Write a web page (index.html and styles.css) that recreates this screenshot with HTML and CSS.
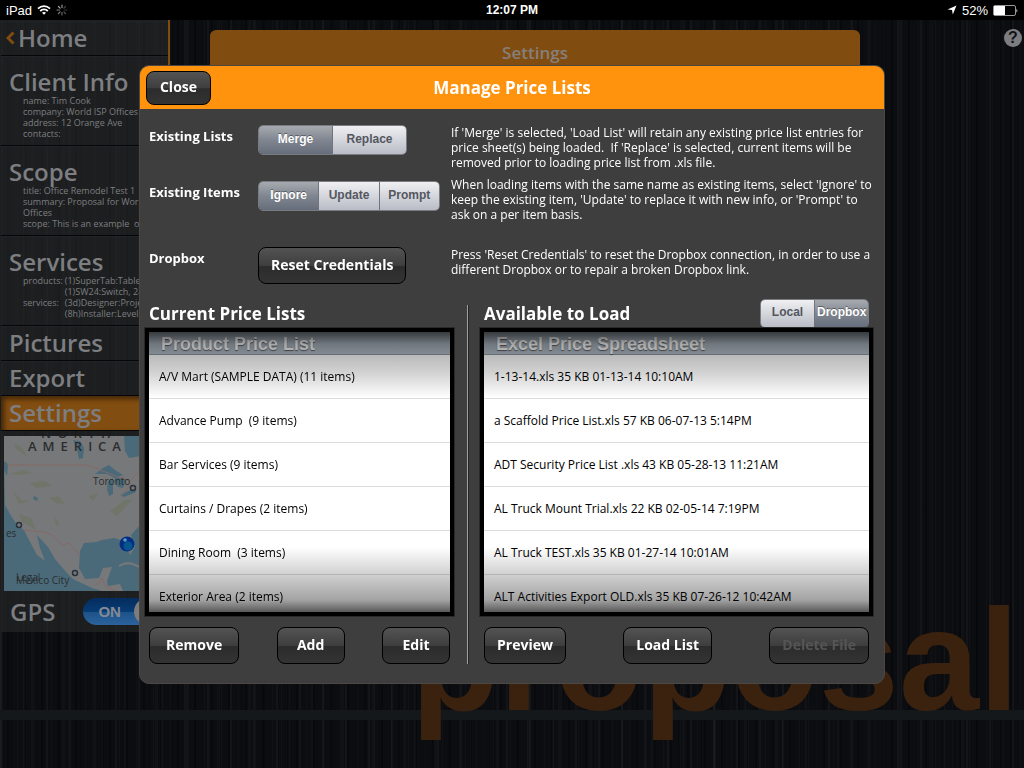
FILE: index.html
```html
<!DOCTYPE html>
<html lang="en">
<head>
  <meta charset="UTF-8">
  <title>Manage Price Lists</title>
  <meta name="viewport" content="width=device-width, initial-scale=1.0">
  <link rel="stylesheet" href="styles.css">
</head>
<body>

<header class="status-bar">
  <div class="status-left">
    <span>iPad</span>
    <svg width="14" height="10" viewBox="0 0 14 10" fill="none" stroke="#fff" stroke-width="1.8">
      <path d="M1 3.6C4.4.4 9.6.4 13 3.6"/>
      <path d="M3.2 6C5.4 4 8.6 4 10.8 6"/>
      <path d="M7 9.8L5 7.7C6.2 6.7 7.8 6.7 9 7.7Z" fill="#fff" stroke="none"/>
    </svg>
    <svg width="12" height="12" viewBox="0 0 12 12" stroke-width="1.2" stroke-linecap="round">
      <path d="M6 1v2.4" stroke="#999"/>
      <path d="M9.5 2.5L7.9 4.1" stroke="#444"/>
      <path d="M11 6H8.6" stroke="#333"/>
      <path d="M9.5 9.5L7.9 7.9" stroke="#555"/>
      <path d="M6 11V8.6" stroke="#666"/>
      <path d="M2.5 9.5L4.1 7.9" stroke="#777"/>
      <path d="M1 6h2.4" stroke="#888"/>
      <path d="M2.5 2.5l1.6 1.6" stroke="#aaa"/>
    </svg>
  </div>
  <div class="status-time">12:07 PM</div>
  <div class="status-right">
    <svg width="10" height="10" viewBox="0 0 10 10"><path d="M9.5.5L5.8 9.5L5 5L.5 4.6Z" fill="#fff"/></svg>
    <span>52%</span>
    <svg width="25" height="11" viewBox="0 0 25 11">
      <rect x=".5" y=".5" width="22" height="10" rx="1.5" fill="none" stroke="#999"/>
      <rect x="1" y="1" width="11" height="9" fill="#fff"/>
      <path d="M23.5 3.5q1.5 2 0 4z" fill="#fff"/>
    </svg>
  </div>
</header>

<main class="app">
  <nav class="sidebar">
    <a class="nav-item home" href="#">
      <svg width="9" height="14" viewBox="0 0 9 14" fill="none" stroke="#814c10" stroke-width="3"><path d="M7.5 1.5L2 7l5.5 5.5"/></svg>
      <span class="nav-title">Home</span>
    </a>
    <a class="nav-item tall" href="#">
      <span class="nav-title">Client Info</span>
      <span class="nav-detail">name: Tim Cook<br>company: World ISP Offices<br>address: 12 Orange Ave<br>contacts:</span>
    </a>
    <a class="nav-item tall" href="#">
      <span class="nav-title">Scope</span>
      <span class="nav-detail">title: Office Remodel Test 1<br>summary: Proposal for World<br>Offices<br>scope: This is an example &nbsp;of</span>
    </a>
    <a class="nav-item tall" href="#">
      <span class="nav-title">Services</span>
      <span class="nav-detail services">
        <span>products:</span><span>(1)SuperTab:Tablet<br>(1)SW24:Switch, 24</span>
        <span>services:</span><span>(3d)Designer:Project<br>(8h)Installer:Level</span>
      </span>
    </a>
    <a class="nav-item" href="#"><span class="nav-title">Pictures</span></a>
    <a class="nav-item" href="#"><span class="nav-title">Export</span></a>
    <a class="nav-item active" href="#"><span class="nav-title">Settings</span></a>

    <svg class="map" width="160" height="155" viewBox="0 0 160 155">
      <rect width="160" height="155" fill="#4a6a79"/>
      <path d="M0 0H160V65L137 88L127 99L131 111L126 119L120 105L110 102L98 104L92 106L80 107L76 115L75 132L81 143L95 142L99 132L108 131L103 145L104 150L116 148L119 155H98L88 152L69 143L62 136L51 123L44 111L33 99L36 112L41 125L33 119L25 104L20 94L13 89L6 78L1 69L0 25Z" fill="#777879"/>
      <g fill="#4a6a79">
        <path d="M91 38L99 32L105 29L111 34L119 39L111 42L103 38Z"/>
        <path d="M104 45L109 42L109 58L105 60L103 53Z"/>
        <path d="M112 41L122 43L119 52L114 51L110 45Z"/>
        <path d="M116 59L130 52L132 56L120 61Z"/>
        <path d="M76 5L80 12L79 22L75 23L73 13L69 4Z"/>
        <path d="M120 0H160V25L137 20L125 22L121 15Z"/>
        <path d="M30 60L34 62L33 65L29 63Z"/>
        <path d="M0 25L4 28L3 40L0 34Z"/>
      </g>
      <g fill="#707569">
        <path d="M6 38l14-4 8 3-12 2zM9 55l8 9 9 1-11 3zM15 78l12 4 5 12-14-8zM25 47l16-2 8 5-16 2zM45 62l10-2 6 8-9-1zM106 75l15-11 8-1-16 17z"/>
        <path d="M10 7l8 5 6 9-12-8zM50 80l6 8-4 2zM85 60l9-3-5 8z"/>
      </g>
      <g fill="none" stroke="#886868">
        <path d="M3 29H84L99 35L114 41L126 45L137 33"/>
        <path d="M19 94L40 96L48 99L59 109L65 107L75 118"/>
        <path d="M91 150L98 142L102 151L112 155M117 60L127 48"/>
      </g>
      <path d="M115 130q9-6 20 1" fill="none" stroke="#777879" stroke-width="2"/>
      <g fill="#777879" stroke="#28313d" stroke-width="1.5">
        <circle cx="129" cy="52" r="2.5"/>
        <circle cx="15" cy="89" r="2.5"/>
        <circle cx="71" cy="137" r="2.5"/>
      </g>
      <g class="map-text">
        <text class="map-region" x="37" y="2">NORTH</text>
        <text class="map-region" x="24" y="15">AMERICA</text>
        <text x="89" y="49">Toronto</text>
        <text x="2" y="101">es</text>
        <text x="12" y="145">Legal</text>
        <text x="12" y="148">Mexico City</text>
      </g>
      <circle cx="123" cy="108" r="7.5" fill="#052d83"/>
      <circle cx="124" cy="110" r="4.5" fill="#07558d"/>
      <circle cx="121" cy="104" r="1.8" fill="#57a1c5"/>
    </svg>

    <div class="gps">
      <label class="nav-title" for="gps">GPS</label>
      <span class="switch">
        <input type="checkbox" id="gps" checked>
        <span class="switch-text">ON</span>
      </span>
    </div>
  </nav>

  <section class="settings-page">
    <h1>Settings</h1>
  </section>

  <button class="help" aria-label="Help">?</button>
  <div class="floor-line"></div>
  <div class="brand">proposal</div>
</main>

<div class="overlay">
  <div class="modal" role="dialog" aria-labelledby="modalTitle">
    <header class="modal-header">
      <button class="btn">Close</button>
      <h2 id="modalTitle">Manage Price Lists</h2>
    </header>

    <div class="options">
      <div class="option">
        <h3>Existing Lists</h3>
        <div class="segmented two">
          <button class="selected" aria-pressed="true">Merge</button>
          <button aria-pressed="false">Replace</button>
        </div>
        <p>If 'Merge' is selected, 'Load List' will retain any existing price list entries for<br>price sheet(s) being loaded.&nbsp; If 'Replace' is selected, current items will be<br>removed prior to loading price list from .xls file.</p>
      </div>
      <div class="option second">
        <h3>Existing Items</h3>
        <div class="segmented three">
          <button class="selected" aria-pressed="true">Ignore</button>
          <button aria-pressed="false">Update</button>
          <button aria-pressed="false">Prompt</button>
        </div>
        <p>When loading items with the same name as existing items, select 'Ignore' to<br>keep the existing item, 'Update' to replace it with new info, or 'Prompt' to<br>ask on a per item basis.</p>
      </div>
      <div class="option third">
        <h3>Dropbox</h3>
        <div><button class="btn">Reset Credentials</button></div>
        <p>Press 'Reset Credentials' to reset the Dropbox connection, in order to use a<br>different Dropbox or to repair a broken Dropbox link.</p>
      </div>
    </div>

    <div class="lists">
      <section class="panel current">
        <div class="panel-head">
          <h3>Current Price Lists</h3>
        </div>
        <div class="list">
          <h4>Product Price List</h4>
          <ul>
            <li>A/V Mart (SAMPLE DATA) (11 items)</li>
            <li>Advance Pump &nbsp;(9 items)</li>
            <li>Bar Services (9 items)</li>
            <li>Curtains / Drapes (2 items)</li>
            <li>Dining Room &nbsp;(3 items)</li>
            <li>Exterior Area (2 items)</li>
          </ul>
        </div>
        <div class="actions">
          <button class="btn">Remove</button>
          <button class="btn">Add</button>
          <button class="btn">Edit</button>
        </div>
      </section>

      <div class="divider"></div>

      <section class="panel available">
        <div class="panel-head">
          <h3>Available to Load</h3>
          <div class="segmented source">
            <button aria-pressed="false">Local</button>
            <button class="selected" aria-pressed="true">Dropbox</button>
          </div>
        </div>
        <div class="list">
          <h4>Excel Price Spreadsheet</h4>
          <ul>
            <li>1-13-14.xls 35 KB 01-13-14 10:10AM</li>
            <li>a Scaffold Price List.xls 57 KB 06-07-13 5:14PM</li>
            <li>ADT Security Price List .xls 43 KB 05-28-13 11:21AM</li>
            <li>AL Truck Mount Trial.xls 22 KB 02-05-14 7:19PM</li>
            <li>AL Truck TEST.xls 35 KB 01-27-14 10:01AM</li>
            <li>ALT Activities Export OLD.xls 35 KB 07-26-12 10:42AM</li>
          </ul>
        </div>
        <div class="actions">
          <button class="btn">Preview</button>
          <button class="btn">Load List</button>
          <button class="btn" disabled>Delete File</button>
        </div>
      </section>
    </div>
  </div>
</div>

</body>
</html>
```

FILE: styles.css
```css
* {
  box-sizing: border-box;
}

body {
  margin: 0;
  min-height: 100vh;
  display: flex;
  flex-direction: column;
  background: #000;
  color: #fff;
  font-family: "Trebuchet MS", "Open Sans", sans-serif;
  overflow: hidden;
}

h1, h2, h3, h4, p, ul {
  margin: 0;
  padding: 0;
}

button {
  font-family: inherit;
  cursor: pointer;
}

/* status bar */
.status-bar {
  display: grid;
  grid-template-columns: 1fr auto 1fr;
  align-items: center;
  height: 20px;
  padding: 0 6px;
  background: #000;
  font: 13px "Liberation Sans", Arial, sans-serif;
}

.status-left,
.status-right {
  display: flex;
  align-items: center;
  gap: 5px;
}

.status-right {
  justify-content: flex-end;
}

.status-time {
  font-size: 12px;
  font-weight: bold;
}

/* page behind the dialog */
.app {
  position: relative;
  flex: 1;
  display: flex;
  align-items: flex-start;
  overflow: hidden;
  background:
    repeating-linear-gradient(90deg, rgba(255,255,255,0.02) 0 1px, transparent 1px 7px, rgba(0,0,0,0.3) 7px 9px, transparent 9px 17px),
    repeating-linear-gradient(90deg, rgba(255,255,255,0.03) 0 2px, transparent 2px 11px, rgba(0,0,0,0.25) 11px 12px, transparent 12px 23px),
    repeating-linear-gradient(90deg, rgba(255,255,255,0.02) 0 3px, transparent 3px 31px),
    #0c0d11;
}

.sidebar {
  width: 169px;
  margin-left: 1px;
  padding-top: 1px;
  flex: none;
  border-right: 2px solid #814c10;
  background: rgba(40,41,42,0.6);
}

.nav-item {
  display: block;
  height: 35px;
  padding-left: 8px;
  border-bottom: 1px solid #050608;
  box-shadow: inset 0 1px #222326;
  color: #7d7e81;
  text-decoration: none;
  white-space: nowrap;
}

.nav-title {
  display: block;
  font-size: 24px;
  font-weight: 600;
  line-height: 34px;
  color: #7d7e81;
}

.home {
  display: flex;
  align-items: center;
  gap: 3px;
  padding-left: 5px;
}

.tall {
  height: 90px;
  padding-top: 9px;
}

.nav-detail {
  display: block;
  margin-left: 14px;
  font-size: 9px;
  line-height: 11px;
}

.tall .nav-title {
  height: 30px;
}

.services {
  display: grid;
  grid-template-columns: auto 1fr;
  column-gap: 2px;
}

.active {
  background: #824d10;
  box-shadow: inset 3px 3px 5px rgba(0,0,0,0.5);
}

.map {
  display: block;
  margin: 5px 0 0 3px;
}

.map-text {
  font-family: "Open Sans", sans-serif;
  font-size: 10px;
  fill: #2b2d30;
}

.map-region {
  font-size: 13px;
  font-weight: 600;
  letter-spacing: 6px;
}

.gps {
  display: flex;
  align-items: center;
  gap: 28px;
  height: 41px;
  padding-left: 9px;
}

.switch {
  position: relative;
  flex: none;
  width: 78px;
  height: 27px;
}

.switch input {
  appearance: none;
  width: 78px;
  height: 27px;
  margin: 0;
  border-radius: 14px;
  background: linear-gradient(#052c5d, #073c75 50%, #1d5289 52%, #2c639d);
}

.switch input::after {
  content: "";
  position: absolute;
  right: 0;
  top: 0;
  width: 27px;
  height: 27px;
  border-radius: 50%;
  background: #7c7c7d;
}

.switch-text {
  position: absolute;
  left: 15px;
  top: 0;
  font: bold 15px/27px "Liberation Sans", Arial, sans-serif;
  color: #858b94;
  pointer-events: none;
}

.settings-page {
  width: 650px;
  height: 640px;
  margin: 10px 0 0 40px;
}

.settings-page h1 {
  height: 60px;
  border-radius: 6px 6px 0 0;
  background: #814c10;
  color: #85807b;
  font-size: 17px;
  font-weight: 600;
  line-height: 46px;
  text-align: center;
}

.help {
  position: absolute;
  top: 9px;
  right: 2px;
  width: 18px;
  height: 18px;
  padding: 0;
  border: none;
  border-radius: 50%;
  background: #7c7d7f;
  color: #111318;
  font: bold 16px/18px "Liberation Sans", Arial, sans-serif;
}

.floor-line {
  position: absolute;
  left: 0;
  right: 0;
  bottom: 48px;
  height: 10px;
  background: #15181b;
}

.brand {
  position: absolute;
  right: 5px;
  bottom: 35px;
  color: #3a220f;
  font-family: "Liberation Sans", Arial, sans-serif;
  font-size: 144px;
  font-weight: bold;
  line-height: 1;
}

/* dialog */
.overlay {
  position: fixed;
  inset: 0;
  display: flex;
  justify-content: center;
  align-items: flex-start;
  padding-top: 65px;
}

.modal {
  width: 746px;
  padding-bottom: 19px;
  border: 1px solid #4c4742;
  border-radius: 10px;
  background: #3e3e3e;
  overflow: hidden;
}

.modal-header {
  display: grid;
  grid-template-columns: 1fr auto 1fr;
  align-items: center;
  height: 43px;
  padding: 0 6px;
  background: #ff930d;
}

.modal-header .btn {
  justify-self: start;
  height: 34px;
}

.modal h2 {
  font-size: 17px;
  font-weight: 700;
}

.btn {
  min-width: 65px;
  height: 37px;
  padding: 0 12px 3px;
  border: 1px solid #000;
  border-radius: 8px;
  background: linear-gradient(#535353, #3e3e3e 50%, #2c2c2c 52%, #333);
  color: #fff;
  font-size: 14px;
  font-weight: 700;
  white-space: nowrap;
}

.btn:disabled {
  color: #555;
}

.options {
  padding: 16px 9px 0;
}

.option {
  display: grid;
  grid-template-columns: 109px 193px 1fr;
  align-items: start;
  height: 56px;
}

.option.second {
  height: 66px;
}

.option.third {
  height: 51px;
}

.option h3 {
  font-size: 13px;
  font-weight: 700;
  line-height: 22px;
}

.option p {
  font-size: 12px;
  line-height: 15px;
  white-space: nowrap;
}

.second p {
  margin-top: -4px;
}

.segmented {
  display: flex;
  height: 30px;
  border: 1px solid #787b80;
  border-radius: 5px;
  overflow: hidden;
}

.segmented button {
  flex: 1;
  min-width: 0;
  padding: 0 2px 2px;
  border: none;
  background: linear-gradient(#f0f0f2, #cfd1d8 60%, #b9bcc6);
  color: #54575f;
  font: bold 12px "Liberation Sans", Arial, sans-serif;
}

.segmented button + button {
  border-left: 1px solid #70747c;
}

.segmented .selected {
  background: linear-gradient(#a7aab0, #808690 50%, #666e7c);
  color: #fff;
  text-shadow: 0 -1px rgba(0,0,0,0.4);
}

.two {
  width: 149px;
}

.three {
  width: 182px;
}

.source {
  width: 109px;
  height: 29px;
}

.lists {
  display: flex;
  padding: 0 11px 0 5px;
}

.panel {
  display: flex;
  flex-direction: column;
}

.current {
  flex: none;
  width: 309px;
}

.divider {
  width: 2px;
  margin: 7px 11px 0 13px;
  border-left: 1px solid #a0a0a0;
  border-right: 1px solid #242424;
}

.available {
  flex: 1;
}

.panel-head {
  display: flex;
  justify-content: space-between;
  align-items: center;
  height: 30px;
  padding: 0 4px;
}

.panel-head h3 {
  font-size: 17px;
  font-weight: 700;
}

.list {
  position: relative;
  height: 288px;
  border: 4px solid #000;
  outline: 1px solid #292929;
  background: #fff;
  overflow: hidden;
}

/* dark fade at both ends of the scroller */
.list::after {
  content: "";
  position: absolute;
  inset: 0;
  background: linear-gradient(rgba(0,0,0,0.65), rgba(0,0,0,0.34) 12px, rgba(0,0,0,0.28) 22px, rgba(0,0,0,0.18) 40px, transparent 66px, transparent 215px, rgba(0,0,0,0.18) 242px, rgba(0,0,0,0.36) 268px, rgba(0,0,0,0.65));
  pointer-events: none;
}

.list h4 {
  height: 23px;
  padding-left: 12px;
  border-bottom: 1px solid #8c98a3;
  background: linear-gradient(#9ba7b2, #b7c0ca);
  color: #fff;
  font: bold 18px/24px "Liberation Sans", Arial, sans-serif;
  text-shadow: 0 1px 1px rgba(0,0,0,0.5);
}

.list ul {
  list-style: none;
}

.list li {
  height: 44px;
  padding-left: 10px;
  border-bottom: 1px solid #ddd;
  color: #000;
  font-size: 12px;
  line-height: 44px;
  white-space: nowrap;
}

.actions {
  display: flex;
  justify-content: space-between;
  padding: 11px 4px 0;
}

.current .btn {
  min-width: 68px;
  padding: 0 16px 3px;
}
```
